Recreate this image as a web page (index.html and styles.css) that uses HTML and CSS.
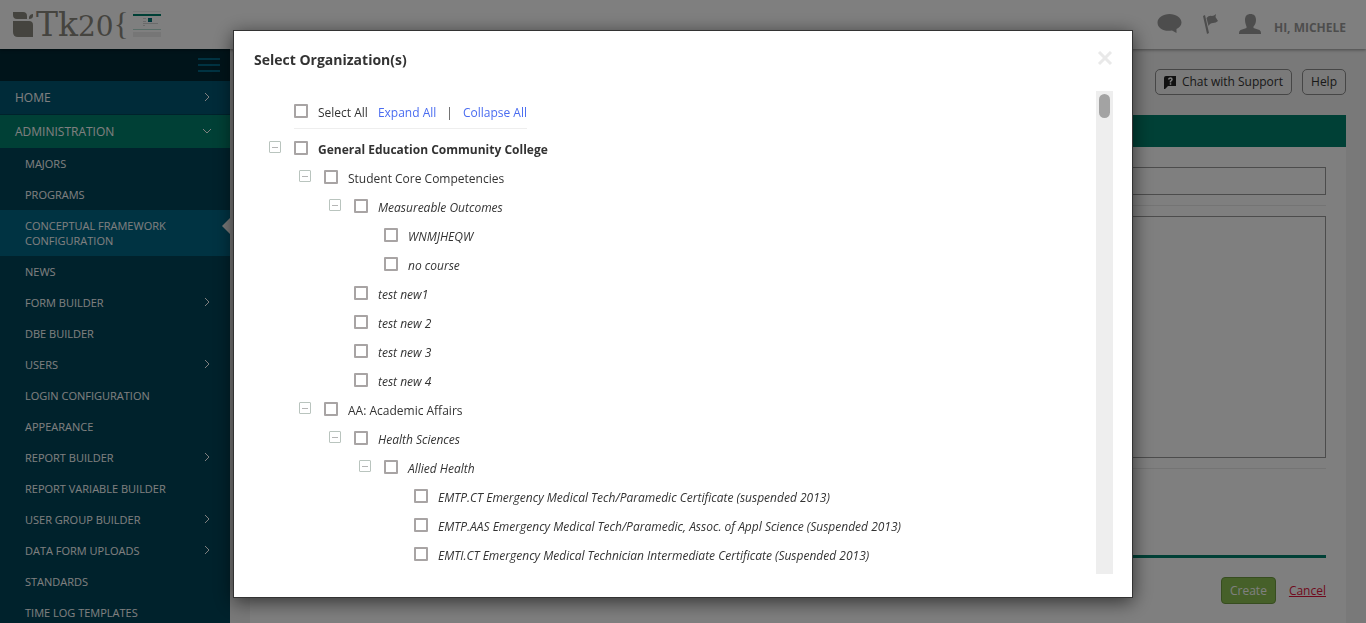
FILE: index.html
```html
<!DOCTYPE html>
<html lang="en">
<head>
<meta charset="utf-8">
<meta name="viewport" content="width=device-width, initial-scale=1">
<title>Select Organization(s)</title>
<link rel="stylesheet" href="styles.css">
</head>
<body>
<div class="app">
  <header class="header">
    <div class="brand">
      <svg class="brand-mark" width="21" height="25" viewBox="0 0 21 25"><path d="M0 0h10q4 0 4 4v3H4Q0 7 0 3zM16 7V5q1-3 4-3v2q0 3-4 3zM0 9h16q4 0 4 4v12H5q-5 0-5-5z"/></svg>
      <span class="brand-name">Tk<span class="brand-digits">20</span></span><span class="brand-brace">{</span>
      <svg class="brand-thumb" width="28" height="26" viewBox="0 0 28 26"><path fill="#ededed" d="M0 0h28v26H0z"/><path fill="#fff" d="M0 1h28v2H0zM0 5h28v16H0z"/><path fill="#00806c" d="M0 3h28v2H0z"/><path fill="#006685" d="M15 7h4v1h-4zM15 10h4v1h-4z"/><path fill="#00806c" d="M15 8h4v2h-4z"/><path fill="#d5d5d5" d="M10 7h3v1h-3zM10 10h3v1h-3zM10 12h15v1H10zM10 14h2v1h-2z"/><path fill="#b5dad0" d="M0 18h28v1H0z"/></svg>
    </div>
    <div class="user">
      <svg width="25" height="20" viewBox="0 0 25 20"><path d="M12.500 0C19 0 24.500 4 24.500 8.500c0 3-2 5-5 6.500V19L15 16.500C7 18 .5 14.500 .5 8.500.5 4 6 0 12.500 0z"/></svg>
      <svg width="17" height="20" viewBox="0 0 17 20"><path d="M1 2l2-1 4 18-2 1zM4.500 4Q7 1 10 2q2 0 4-2l-.5 3 2.500 4q-2 2-5 2-3 0-4.500 3z"/></svg>
      <svg width="22" height="20" viewBox="0 0 22 20"><path d="M6 6c0-4 2-6 5.500-6S17 2 17 6c0 3-1 5-2.500 6.500V14l6 2q1.500 1 1.500 3v1H0v-1q0-2 1.500-3l6-2v-1.500C7 11 6 9 6 6z"/></svg>
      <span>HI, MICHELE</span>
    </div>
  </header>
  <div class="body">
    <nav class="sidebar">
      <button class="toggle" aria-label="Toggle menu"><svg width="22" height="14" viewBox="0 0 22 14"><path d="M0 0h22v2H0zM0 6h22v2H0zM0 12h22v2H0z"/></svg></button>
      <a class="section" href="#">HOME<svg class="chev" width="10" height="10" viewBox="0 0 10 10"><path d="M3 1l4 4-4 4"/></svg></a>
      <a class="section open" href="#">ADMINISTRATION<svg class="chev" width="10" height="10" viewBox="0 0 10 10"><path d="M1 3l4 4 4-4"/></svg></a>
      <a class="item" href="#">MAJORS</a>
      <a class="item" href="#">PROGRAMS</a>
      <a class="item active" href="#">CONCEPTUAL FRAMEWORK<br>CONFIGURATION</a>
      <a class="item" href="#">NEWS</a>
      <a class="item" href="#">FORM BUILDER<svg class="chev" width="10" height="10" viewBox="0 0 10 10"><path d="M3 1l4 4-4 4"/></svg></a>
      <a class="item" href="#">DBE BUILDER</a>
      <a class="item" href="#">USERS<svg class="chev" width="10" height="10" viewBox="0 0 10 10"><path d="M3 1l4 4-4 4"/></svg></a>
      <a class="item" href="#">LOGIN CONFIGURATION</a>
      <a class="item" href="#">APPEARANCE</a>
      <a class="item" href="#">REPORT BUILDER<svg class="chev" width="10" height="10" viewBox="0 0 10 10"><path d="M3 1l4 4-4 4"/></svg></a>
      <a class="item" href="#">REPORT VARIABLE BUILDER</a>
      <a class="item" href="#">USER GROUP BUILDER<svg class="chev" width="10" height="10" viewBox="0 0 10 10"><path d="M3 1l4 4-4 4"/></svg></a>
      <a class="item" href="#">DATA FORM UPLOADS<svg class="chev" width="10" height="10" viewBox="0 0 10 10"><path d="M3 1l4 4-4 4"/></svg></a>
      <a class="item" href="#">STANDARDS</a>
      <a class="item" href="#">TIME LOG TEMPLATES</a>
    </nav>
    <main class="main">
      <div class="tools">
        <button class="btn"><svg width="12" height="13" viewBox="0 0 12 13"><path fill="#222" d="M2 0h10v10H4l-3 3H0V2q0-2 2-2z"/><path fill="none" stroke="#fff" stroke-width="1.500" d="M4.500 3.500Q5 2 6.500 2T8 3.500Q8 4.500 6.500 5.300V6.500M6.500 7.300v1.400"/></svg>Chat with Support</button>
        <button class="btn">Help</button>
      </div>
      <form class="card">
        <div class="card-head"></div>
        <div class="card-body">
          <div class="field"><input class="text" type="text" aria-label="Name"></div>
          <div class="field"><textarea class="text area" aria-label="Description"></textarea></div>
          <div class="actions"><button class="create" type="button">Create</button><a class="cancel" href="#">Cancel</a></div>
        </div>
      </form>
    </main>
  </div>
</div>

<div class="overlay">
  <section class="modal" role="dialog" aria-modal="true" aria-labelledby="dialog-title">
    <div class="modal-head">
      <h1 id="dialog-title">Select Organization(s)</h1>
      <button class="close" aria-label="Close"><svg width="16" height="16" viewBox="0 0 16 16"><path d="M2 1l12 12M14 1L2 13"/></svg></button>
    </div>
    <div class="scroller">
      <div class="scroll-content">
        <div class="select-all">
          <label><input type="checkbox">Select All</label>
          <a href="#">Expand All</a><span>|</span><a href="#">Collapse All</a>
        </div>
        <ul class="tree">
          <li>
            <div class="row root"><button class="fold" aria-label="Collapse"></button><label><input type="checkbox">General Education Community College</label></div>
            <ul>
              <li>
                <div class="row"><button class="fold" aria-label="Collapse"></button><label><input type="checkbox">Student Core Competencies</label></div>
                <ul class="deep">
                  <li>
                    <div class="row"><button class="fold" aria-label="Collapse"></button><label><input type="checkbox">Measureable Outcomes</label></div>
                    <ul>
                      <li class="row"><label><input type="checkbox">WNMJHEQW</label></li>
                      <li class="row"><label><input type="checkbox">no course</label></li>
                    </ul>
                  </li>
                  <li class="row"><label><input type="checkbox">test new1</label></li>
                  <li class="row"><label><input type="checkbox">test new 2</label></li>
                  <li class="row"><label><input type="checkbox">test new 3</label></li>
                  <li class="row"><label><input type="checkbox">test new 4</label></li>
                </ul>
              </li>
              <li>
                <div class="row"><button class="fold" aria-label="Collapse"></button><label><input type="checkbox">AA: Academic Affairs</label></div>
                <ul class="deep">
                  <li>
                    <div class="row"><button class="fold" aria-label="Collapse"></button><label><input type="checkbox">Health Sciences</label></div>
                    <ul>
                      <li>
                        <div class="row"><button class="fold" aria-label="Collapse"></button><label><input type="checkbox">Allied Health</label></div>
                        <ul>
                          <li class="row"><label><input type="checkbox">EMTP.CT Emergency Medical Tech/Paramedic Certificate (suspended 2013)</label></li>
                          <li class="row"><label><input type="checkbox">EMTP.AAS Emergency Medical Tech/Paramedic, Assoc. of Appl Science (Suspended 2013)</label></li>
                          <li class="row"><label><input type="checkbox">EMTI.CT Emergency Medical Technician Intermediate Certificate (Suspended 2013)</label></li>
                        </ul>
                      </li>
                    </ul>
                  </li>
                </ul>
              </li>
            </ul>
          </li>
        </ul>
      </div>
      <div class="rail"><div class="thumb"></div></div>
    </div>
  </section>
</div>
</body>
</html>
```
FILE: styles.css
```css
* { box-sizing: border-box; }
body {
  margin: 0;
  font: 12px/16px "Open Sans", "Noto Sans", sans-serif;
  color: #333;
}
button { font: inherit; color: inherit; margin: 0; padding: 0; border: 0; background: none; }
a { text-decoration: none; }
svg { display: block; flex: none; }

.app { display: flex; flex-direction: column; height: 100vh; overflow: hidden; }
.header {
  display: flex;
  flex: none;
  align-items: center;
  justify-content: space-between;
  height: 49px;
  padding: 0 20px 0 13px;
  background: #fff;
  box-shadow: 0 1px 3px rgba(0, 0, 0, .4);
  position: relative;
}
.brand { display: flex; align-items: center; color: #8a887e; }
.brand-mark { fill: #8a887e; margin-right: 2px; }
.brand-name { padding-top: 3px; font: 33px/44px "DejaVu Serif", serif; }
.brand-digits { font-size: 28px; }
.brand-brace { font: 31px/40px "Liberation Serif", serif; margin-right: 4px; }
.brand-thumb { margin-bottom: 2px; }
.user { display: flex; align-items: center; gap: 20px; color: #9b9b9b; font-weight: 700; padding-bottom: 1px; }
.user svg { fill: #9b9b9b; }
.user span { padding-top: 7px; margin-left: -7px; }

.body { display: flex; flex: 1; min-height: 0; }
.sidebar { flex: none; width: 230px; background: #004458; overflow: hidden; }
.toggle { display: flex; align-items: center; justify-content: flex-end; width: 100%; height: 32px; padding-right: 10px; background: #002834; }
.toggle svg { fill: #006685; }
.section, .item { display: flex; align-items: center; justify-content: space-between; color: #fff; padding-right: 18px; }
.section { height: 34px; padding-left: 15px; background: #005672; border-bottom: 1px solid #004458; }
.section.open { height: 33px; padding-top: 1px; background: #00806c; border-bottom: 0; }
.item { padding: 8px 18px 8px 25px; font-size: 11px; line-height: 15px; }
.item.active {
  background: #006685;
  position: relative;
}
.item.active::after {
  content: "";
  position: absolute;
  right: 0;
  top: 8px;
  border: 8px solid transparent;
  border-left: 0;
  border-right-color: #f2f2f2;
}
.chev { fill: none; stroke: #fff; margin-bottom: 2px; }

.main { flex: 1; display: flex; flex-direction: column; padding: 20px 20px 0; background: #f2f2f2; }
.tools { display: flex; justify-content: flex-end; gap: 10px; margin-bottom: 20px; }
.btn { display: flex; align-items: center; gap: 6px; height: 26px; padding: 0 8px; border: 1px solid #8c8c8c; border-radius: 5px; background: #f4f4f4; }
.card { flex: 1; background: #fff; }
.card-head { height: 32px; background: #00806c; }
.card-body { padding: 20px; }
.field { padding-bottom: 10px; margin-bottom: 10px; border-bottom: 1px solid #e8e8e8; }
.text { display: block; width: 100%; height: 28px; border: 1px solid #999; background: #fff; }
.area { height: 242px; resize: none; }
.actions { display: flex; align-items: center; justify-content: flex-end; gap: 13px; margin-top: 86px; padding-top: 19px; border-top: 3px solid #00806c; }
.create { height: 27px; padding: 0 8px; color: #fff; background: #8cc152; border: 1px solid #6f9a41; border-radius: 4px; }
.cancel { color: #e0143c; text-decoration: underline; }

.overlay { position: fixed; inset: 0; display: flex; align-items: flex-start; justify-content: center; padding-top: 30px; background: rgba(0, 0, 0, .5); }
.modal { width: 900px; max-width: 100%; padding: 20px 19px 23px 20px; border: 1px solid #333; background: #fff; box-shadow: 0 4px 18px rgba(0, 0, 0, .6); }
.modal-head { display: flex; justify-content: space-between; align-items: flex-start; height: 40px; }
.modal-head h1 { margin: 0; font-size: 14px; line-height: 18px; font-weight: 700; }
.close svg { fill: none; stroke: #e9e9e9; stroke-width: 3; }
.scroller { display: flex; height: 483px; }
.scroll-content { flex: 1; overflow: hidden; padding-left: 40px; }
.rail { flex: none; width: 17px; padding: 3px; background: #eee; }
.thumb { height: 24px; border-radius: 6px; background: #a3a3a3; }
.select-all { display: flex; align-items: center; gap: 10px; width: max-content; margin-bottom: 6px; padding: 13px 0 7px; border-bottom: 1px solid #eee; }
.select-all a { color: #4a6cf0; }
.select-all span { color: #555; }

.tree, .tree ul { margin: 0; padding: 0; list-style: none; }
.tree ul { padding-left: 30px; }
.row { display: flex; align-items: center; height: 29px; }
.root { font-weight: 700; }
.deep { font-style: italic; }
label { display: flex; align-items: center; white-space: nowrap; }
input[type="checkbox"] { appearance: none; flex: none; width: 14px; height: 14px; margin: 0 10px 3px 0; border: 2px solid #a8a4a4; border-radius: 1px; background: #fff; }
.fold { display: flex; align-items: center; justify-content: center; flex: none; width: 12px; height: 12px; margin: 0 13px 5px -25px; border: 1px solid #b9c4be; border-radius: 1px; }
.fold::before { content: ""; width: 6px; height: 1px; background: #b5b5b5; }
```
